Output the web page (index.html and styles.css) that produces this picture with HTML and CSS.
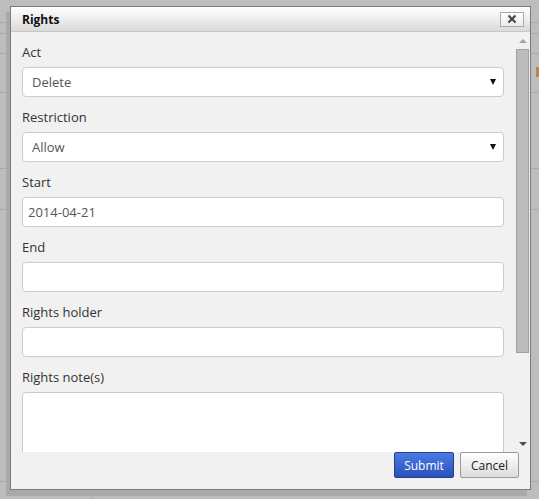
FILE: index.html
```html
<!DOCTYPE html>
<html>
<head>
<meta charset="utf-8">
<link rel="stylesheet" href="styles.css">
</head>
<body>
<div class="backdrop">
  <div class="bg-mark"></div>
</div>
<div class="dialog">
  <div class="titlebar">
    <span class="title">Rights</span>
    <button class="close" type="button" aria-label="Close">
      <svg width="10" height="10" viewBox="0 0 10 10"><path d="M1.5 1.5 L8.5 8.5 M8.5 1.5 L1.5 8.5" stroke="#444" stroke-width="2" fill="none"/></svg>
    </button>
  </div>
  <div class="body">
    <div class="content">
      <div class="field">
        <label class="label">Act</label>
        <div class="select"><span>Delete</span><i class="caret"></i></div>
      </div>
      <div class="field">
        <label class="label">Restriction</label>
        <div class="select"><span>Allow</span><i class="caret"></i></div>
      </div>
      <div class="field">
        <label class="label">Start</label>
        <div class="input">2014-04-21</div>
      </div>
      <div class="field">
        <label class="label">End</label>
        <div class="input"></div>
      </div>
      <div class="field">
        <label class="label">Rights holder</label>
        <div class="input"></div>
      </div>
      <div class="field">
        <label class="label">Rights note(s)</label>
        <div class="textarea"></div>
      </div>
    </div>
    <div class="scrollbar">
      <i class="arrow-up"></i>
      <div class="track"><div class="thumb"></div></div>
      <i class="arrow-down"></i>
    </div>
  </div>
  <div class="buttons">
    <button class="btn btn-primary" type="button">Submit</button>
    <button class="btn btn-default" type="button">Cancel</button>
  </div>
</div>
</body>
</html>
```
FILE: styles.css
```css
html, body {
  margin: 0;
  padding: 0;
}
body {
  width: 539px;
  height: 499px;
  overflow: hidden;
  font-family: "Open Sans", "DejaVu Sans", sans-serif;
  background-color: #bdbdbd;
  background-image:
    linear-gradient(#a9a9a9, #a9a9a9),
    linear-gradient(#a9a9a9, #a9a9a9),
    linear-gradient(#a9a9a9, #a9a9a9),
    linear-gradient(#a9a9a9, #a9a9a9),
    linear-gradient(#a9a9a9, #a9a9a9),
    linear-gradient(#a9a9a9, #a9a9a9),
    linear-gradient(#a9a9a9, #a9a9a9),
    linear-gradient(#a9a9a9, #a9a9a9);
  background-repeat: no-repeat;
  background-size: 100% 1px, 100% 1px, 100% 1px, 100% 1px, 100% 1px, 100% 1px, 100% 1px, 1px 20px;
  background-position: 0 22px, 0 33px, 0 53px, 0 92px, 0 168px, 0 209px, 0 481px, 91px 480px;
  position: relative;
}
.backdrop {
  position: absolute;
  inset: 0;
}
.bg-mark {
  position: absolute;
  left: 536px;
  top: 67px;
  width: 3px;
  height: 10px;
  background: #b78a4a;
}
.dialog {
  position: absolute;
  left: 10px;
  top: 6px;
  width: 519px;
  height: 482px;
  border: 1px solid #7c7c7c;
  background: #f1f1f1;
  box-shadow: -4px 6px 0 #a9a9a9;
  display: flex;
  flex-direction: column;
}
.titlebar {
  height: 24px;
  flex: none;
  border-bottom: 1px solid #c6c6c6;
  background: linear-gradient(#ffffff, #dadada);
  display: flex;
  align-items: center;
  justify-content: space-between;
  padding: 0 6px 0 11px;
}
.title {
  font-weight: bold;
  font-size: 12px;
  color: #111;
}
.close {
  width: 24px;
  height: 15px;
  padding: 0;
  margin: 0;
  border: 1px solid #a9a9a9;
  background: linear-gradient(#ffffff, #ececec);
  display: flex;
  align-items: center;
  justify-content: center;
  box-sizing: border-box;
}
.body {
  height: 420px;
  flex: none;
  display: flex;
  overflow: hidden;
}
.content {
  flex: 1;
  padding: 11px 11px 0 11px;
  overflow: hidden;
}
.field {
  margin-bottom: 11px;
}
.label {
  display: block;
  height: 18px;
  line-height: 18px;
  font-size: 13px;
  color: #333;
  margin-bottom: 6px;
}
.select, .input, .textarea {
  box-sizing: border-box;
  height: 30px;
  background: #fff;
  border: 1px solid #cbcbcb;
  border-radius: 4px;
  font-size: 13px;
  color: #555;
  padding: 0 10px 0 9px;
  line-height: 28px;
  display: flex;
  align-items: center;
  justify-content: space-between;
}
.input {
  padding-left: 5px;
}
.textarea {
  height: 90px;
}
.caret {
  width: 0;
  height: 0;
  border-left: 3.5px solid transparent;
  border-right: 3.5px solid transparent;
  border-top: 6px solid #111;
  margin-right: -3px;
}
.scrollbar {
  width: 15px;
  flex: none;
  display: flex;
  flex-direction: column;
  align-items: center;
}
.arrow-up {
  margin-top: 7px;
  width: 0;
  height: 0;
  border-left: 4px solid transparent;
  border-right: 4px solid transparent;
  border-bottom: 4px solid #a3a3a3;
}
.track {
  flex: 1;
  width: 100%;
  padding: 6px 1px 0 1px;
  box-sizing: border-box;
}
.thumb {
  box-sizing: border-box;
  height: 304px;
  background: #bcbcbc;
  border: 1px solid #a2a2a2;
}
.arrow-down {
  margin-bottom: 6px;
  width: 0;
  height: 0;
  border-left: 4px solid transparent;
  border-right: 4px solid transparent;
  border-top: 4px solid #505050;
}
.buttons {
  flex: 1;
  display: flex;
  justify-content: flex-end;
  align-items: flex-start;
  gap: 6px;
  padding-right: 11px;
}
.btn {
  box-sizing: border-box;
  height: 26px;
  font-family: "Open Sans", "DejaVu Sans", sans-serif;
  font-size: 12px;
  padding: 0;
  margin: 0;
  border-radius: 2px;
}
.btn-primary {
  width: 60px;
  color: #fff;
  border: 1px solid #23408f;
  background: linear-gradient(#4a7ae6, #2a52b8);
}
.btn-default {
  width: 59px;
  color: #222;
  border: 1px solid #9b9b9b;
  background: linear-gradient(#ffffff, #dcdcdc);
}
```
